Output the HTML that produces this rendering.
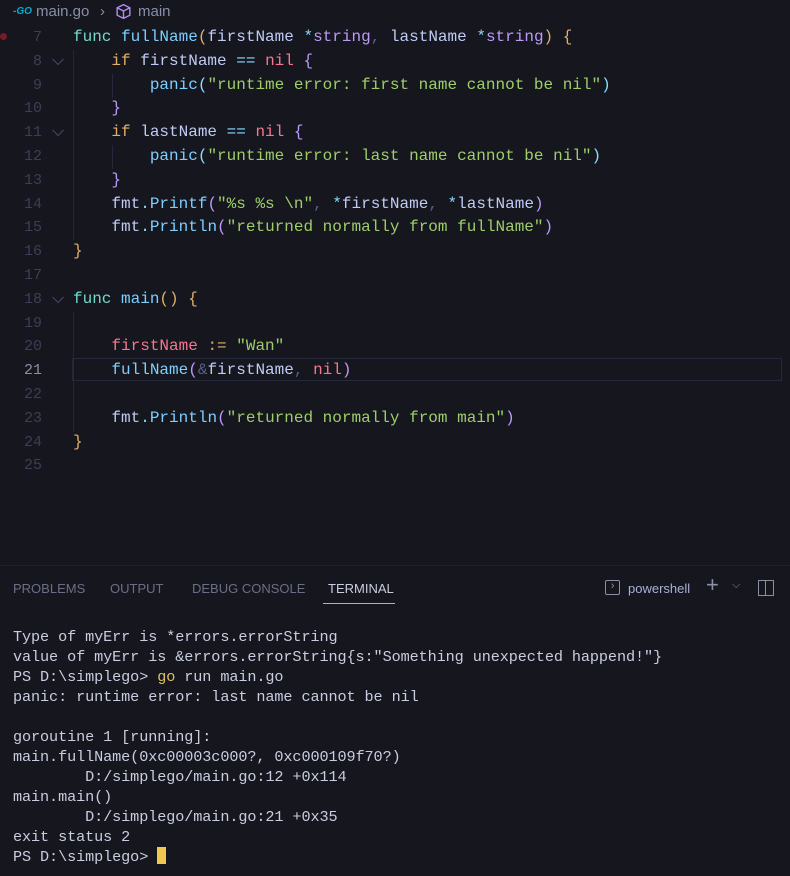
<!DOCTYPE html>
<html><head><meta charset="utf-8"><style>
body{margin:0;width:790px;height:875px;background:#15161e;overflow:hidden;position:relative;font-family:"Liberation Mono",monospace}
.bc{position:absolute;top:0;left:0;width:300px;height:24px;font:15px "Liberation Sans",sans-serif;color:#8a8fa8;line-height:24px;white-space:nowrap}
.ln{position:absolute;left:0;width:42px;text-align:right;color:#3b3f55;font-size:15px}
.code{position:absolute;left:73px;white-space:pre;font-size:16px;color:#a9b1d6}
.row{position:absolute;left:0;width:790px;height:23.8px;line-height:23.8px}
.k{color:#73daca}.f{color:#7dcfff}.t{color:#bb9af7}.y{color:#e0af68}.n{color:#f7768e}.s{color:#9ece6a}.c{color:#89ddff}.g{color:#565f89}.p{color:#c0caf5}
.guide{position:absolute;width:1px;background:#25273a}
.panel{position:absolute;top:565px;left:0;width:790px;height:310px;background:#16161e;border-top:1px solid #1f2030}
.tab{position:absolute;top:15px;font:13px "Liberation Sans",sans-serif;color:#6b6f85;white-space:nowrap}
.term{position:absolute;left:13px;top:627px;font-size:15.2px;line-height:20px;color:#c8cde0;white-space:pre;letter-spacing:-0.1px}
</style></head><body>
<div class="bc"><span style="position:absolute;left:13px;top:0;color:#00add8;font-weight:bold;font-size:10px;font-style:italic;white-space:nowrap">-GO</span><span style="position:absolute;left:36px">main.go</span><span style="position:absolute;left:100px">›</span>
<svg style="position:absolute;left:115px;top:3px" width="17" height="17" viewBox="0 0 16 16" fill="none" stroke="#b48ef0" stroke-width="1.3"><path d="M8 1.5 14 4.5v7L8 14.5 2 11.5v-7z M2 4.5 8 7.5 14 4.5 M8 7.5v7"/></svg>
<span style="position:absolute;left:138px">main</span></div>
<div style="position:absolute;left:0;top:33px;width:7px;height:7px;border-radius:50%;background:#7a1a24"></div>
<div class="guide" style="left:73px;top:50px;height:190px"></div>
<div class="guide" style="left:112px;top:74px;height:24px"></div>
<div class="guide" style="left:112px;top:145px;height:24px"></div>
<div class="guide" style="left:73px;top:312px;height:120px"></div>
<div style="position:absolute;left:72px;top:358px;width:710px;height:23px;border:1px solid #25273a;box-sizing:border-box"></div>
<div style="position:absolute;top:26px;left:0;width:790px">
<div class="row" style="top:0"><span class="ln">7</span><span class="code"><span class="k">func</span> <span class="f">fullName</span><span class="y">(</span><span class="p">firstName</span> <span class="c">*</span><span class="t">string</span><span class="g">,</span> <span class="p">lastName</span> <span class="c">*</span><span class="t">string</span><span class="y">)</span> <span class="y">{</span></span></div>
<div class="row" style="top:23.8px"><span class="ln">8</span><span class="g" style="position:absolute;left:52px">⌵</span><span class="code">    <span class="y">if</span> <span class="p">firstName</span> <span class="c">==</span> <span class="n">nil</span> <span class="t">{</span></span></div>
<div class="row" style="top:47.6px"><span class="ln">9</span><span class="code">        <span class="f">panic</span><span class="c">(</span><span class="s">"runtime error: first name cannot be nil"</span><span class="c">)</span></span></div>
<div class="row" style="top:71.4px"><span class="ln">10</span><span class="code">    <span class="t">}</span></span></div>
<div class="row" style="top:95.2px"><span class="ln">11</span><span class="g" style="position:absolute;left:52px">⌵</span><span class="code">    <span class="y">if</span> <span class="p">lastName</span> <span class="c">==</span> <span class="n">nil</span> <span class="t">{</span></span></div>
<div class="row" style="top:119px"><span class="ln">12</span><span class="code">        <span class="f">panic</span><span class="c">(</span><span class="s">"runtime error: last name cannot be nil"</span><span class="c">)</span></span></div>
<div class="row" style="top:142.8px"><span class="ln">13</span><span class="code">    <span class="t">}</span></span></div>
<div class="row" style="top:166.6px"><span class="ln">14</span><span class="code">    <span class="p">fmt</span><span class="c">.</span><span class="f">Printf</span><span class="t">(</span><span class="s">"%s %s \n"</span><span class="g">,</span> <span class="c">*</span><span class="p">firstName</span><span class="g">,</span> <span class="c">*</span><span class="p">lastName</span><span class="t">)</span></span></div>
<div class="row" style="top:190.4px"><span class="ln">15</span><span class="code">    <span class="p">fmt</span><span class="c">.</span><span class="f">Println</span><span class="t">(</span><span class="s">"returned normally from fullName"</span><span class="t">)</span></span></div>
<div class="row" style="top:214.2px"><span class="ln">16</span><span class="code"><span class="y">}</span></span></div>
<div class="row" style="top:238px"><span class="ln">17</span></div>
<div class="row" style="top:261.8px"><span class="ln">18</span><span class="g" style="position:absolute;left:52px">⌵</span><span class="code"><span class="k">func</span> <span class="f">main</span><span class="y">()</span> <span class="y">{</span></span></div>
<div class="row" style="top:285.6px"><span class="ln">19</span></div>
<div class="row" style="top:309.4px"><span class="ln">20</span><span class="code">    <span class="n">firstName</span> <span class="y">:=</span> <span class="s">"Wan"</span></span></div>
<div class="row" style="top:333.2px"><span class="ln" style="color:#8a8fa8">21</span><span class="code">    <span class="f">fullName</span><span class="t">(</span><span class="g">&amp;</span><span class="p">firstName</span><span class="g">,</span> <span class="n">nil</span><span class="t">)</span></span></div>
<div class="row" style="top:357px"><span class="ln">22</span></div>
<div class="row" style="top:380.8px"><span class="ln">23</span><span class="code">    <span class="p">fmt</span><span class="c">.</span><span class="f">Println</span><span class="t">(</span><span class="s">"returned normally from main"</span><span class="t">)</span></span></div>
<div class="row" style="top:404.6px"><span class="ln">24</span><span class="code"><span class="y">}</span></span></div>
<div class="row" style="top:428.4px"><span class="ln">25</span></div>
</div>
<div class="panel">
<span class="tab" style="left:13px">PROBLEMS</span>
<span class="tab" style="left:110px">OUTPUT</span>
<span class="tab" style="left:192px">DEBUG CONSOLE</span>
<span class="tab" style="left:328px;color:#c8cde0">TERMINAL</span>
<div style="position:absolute;left:323px;top:37px;width:72px;height:1px;background:#a9b1d6"></div>
<div style="position:absolute;left:605px;top:14px;width:15px;height:15px;border:1px solid #8a8fa8;box-sizing:border-box;border-radius:2px;color:#8a8fa8;font-size:11px;line-height:13px;text-align:center">›</div>
<span class="tab" style="left:628px;color:#a9b1d6">powershell</span>
<span style="position:absolute;left:706px;top:6px;color:#8a8fa8;font:22px 'Liberation Sans',sans-serif">+</span>
<span style="position:absolute;left:732px;top:14px;color:#8a8fa8;font-size:11px">⌵</span>
<div style="position:absolute;left:758px;top:14px;width:16px;height:16px;border:1px solid #8a8fa8;box-sizing:border-box"><div style="position:absolute;left:6px;top:0;width:1px;height:14px;background:#8a8fa8"></div></div>
</div>
<div class="term">Type of myErr is *errors.errorString
value of myErr is &amp;errors.errorString{s:"Something unexpected happend!"}
PS D:\simplego&gt; <span style="color:#e0c060">go</span> run main.go
panic: runtime error: last name cannot be nil

goroutine 1 [running]:
main.fullName(0xc00003c000?, 0xc000109f70?)
        D:/simplego/main.go:12 +0x114
main.main()
        D:/simplego/main.go:21 +0x35
exit status 2
PS D:\simplego&gt; <span style="display:inline-block;width:9px;height:17px;background:#f0c850;vertical-align:-3px"></span></div>
</body></html>
